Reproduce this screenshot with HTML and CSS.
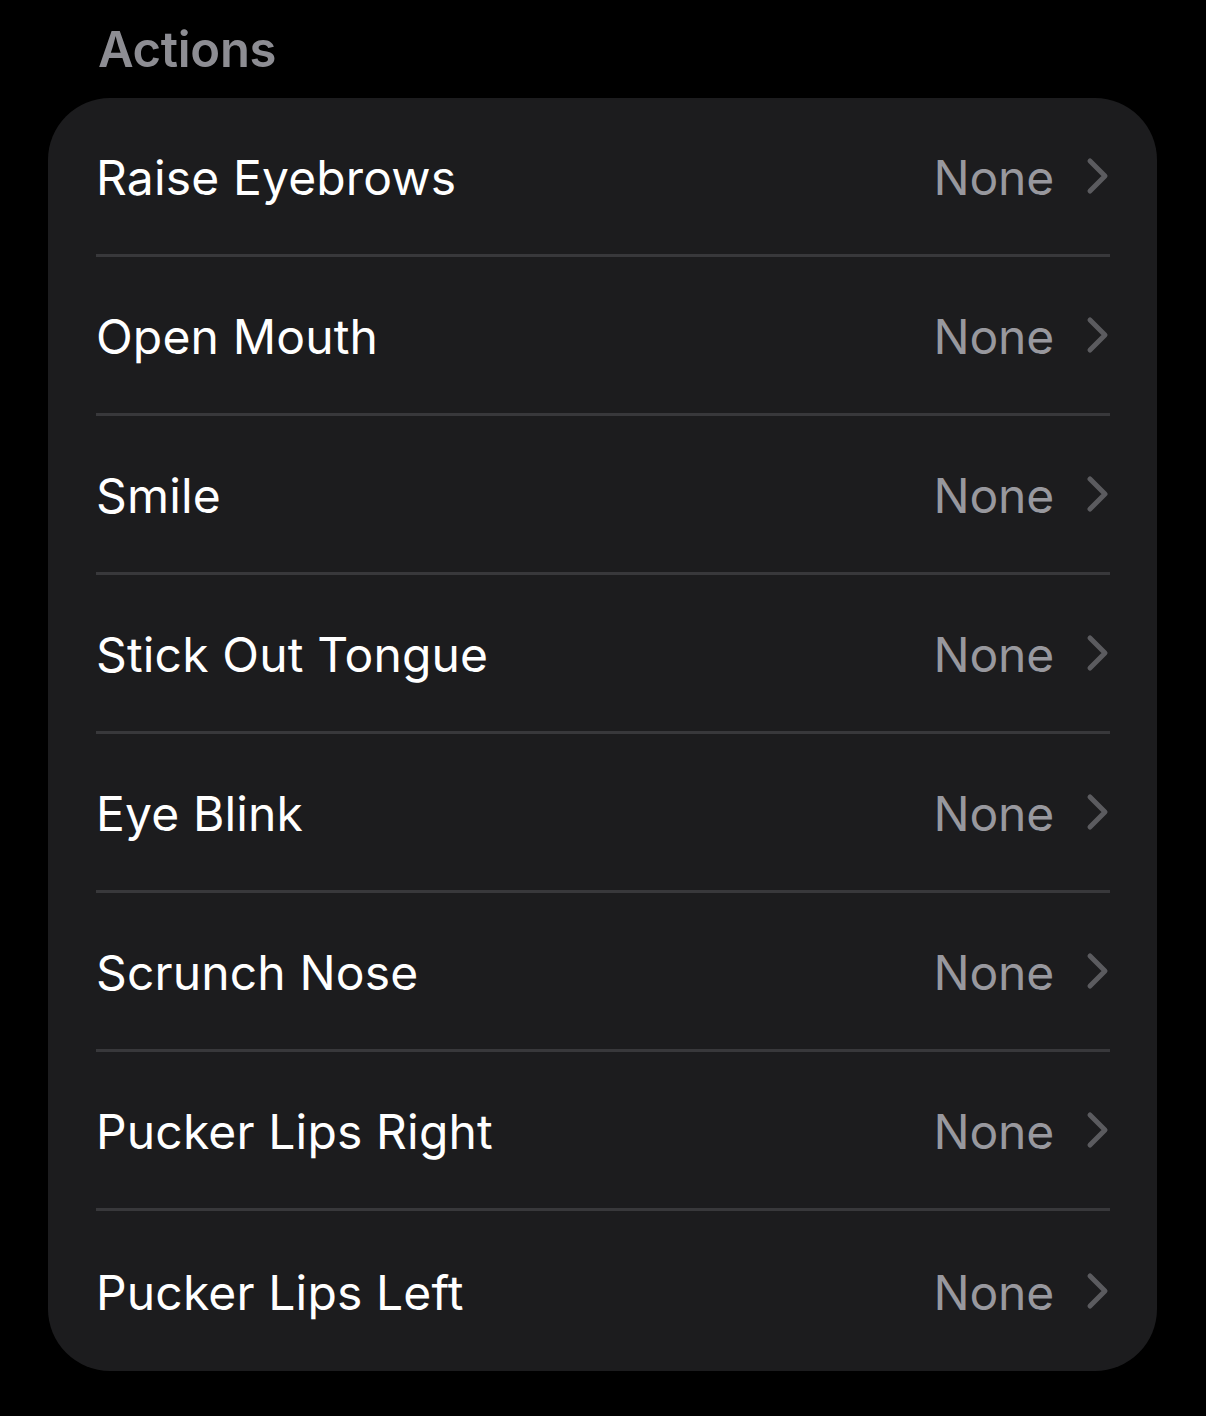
FILE: index.html
```html
<!DOCTYPE html>
<html lang="en">
<head>
<meta charset="utf-8">
<title>Actions</title>
<link rel="stylesheet" href="styles.css">
</head>
<body>
<main class="page">
  <h2 class="section-title">Actions</h2>
  <ul class="list">
    <li class="row"><span class="label">Raise Eyebrows</span><span class="value">None</span><svg class="chev" viewBox="0 0 24 38"><path d="M4 4 L19 19 L4 34"/></svg></li>
    <li class="row"><span class="label">Open Mouth</span><span class="value">None</span><svg class="chev" viewBox="0 0 24 38"><path d="M4 4 L19 19 L4 34"/></svg></li>
    <li class="row"><span class="label">Smile</span><span class="value">None</span><svg class="chev" viewBox="0 0 24 38"><path d="M4 4 L19 19 L4 34"/></svg></li>
    <li class="row"><span class="label">Stick Out Tongue</span><span class="value">None</span><svg class="chev" viewBox="0 0 24 38"><path d="M4 4 L19 19 L4 34"/></svg></li>
    <li class="row"><span class="label">Eye Blink</span><span class="value">None</span><svg class="chev" viewBox="0 0 24 38"><path d="M4 4 L19 19 L4 34"/></svg></li>
    <li class="row"><span class="label">Scrunch Nose</span><span class="value">None</span><svg class="chev" viewBox="0 0 24 38"><path d="M4 4 L19 19 L4 34"/></svg></li>
    <li class="row"><span class="label">Pucker Lips Right</span><span class="value">None</span><svg class="chev" viewBox="0 0 24 38"><path d="M4 4 L19 19 L4 34"/></svg></li>
    <li class="row"><span class="label">Pucker Lips Left</span><span class="value">None</span><svg class="chev" viewBox="0 0 24 38"><path d="M4 4 L19 19 L4 34"/></svg></li>
  </ul>
</main>
</body>
</html>
```
FILE: styles.css
```css
* { box-sizing: border-box; }
html, body {
  margin: 0;
  padding: 0;
  background: #000;
  height: 100%;
}
body {
  font-family: Inter, "Noto Sans", "Liberation Sans", sans-serif;
  color: #fff;
}
.page {
  padding: 0 49px 0 48px;
}
.section-title {
  margin: 0;
  padding: 20px 0 0 50px;
  height: 98px;
  font-size: 49px;
  line-height: 60px;
  font-weight: 600;
  color: #8d8d93;
  letter-spacing: -0.3px;
}
.list {
  list-style: none;
  margin: 0;
  padding: 0 47px 0 48px;
  background: #1c1c1e;
  border-radius: 62px;
}
.row {
  display: flex;
  align-items: center;
  height: 159px;
  border-bottom: 3px solid #38383b;
}
.row:last-child {
  border-bottom: none;
  height: 160px;
}
.label {
  flex: 1;
  font-size: 48px;
  line-height: 1;
  letter-spacing: 0.15px;
  padding-top: 4px;
}
.value {
  font-size: 48px;
  line-height: 1;
  color: #98989e;
  letter-spacing: -0.2px;
  padding-top: 4px;
  margin-right: 32px;
}
.chev {
  width: 24px;
  height: 38px;
  fill: none;
  stroke: #5b5b5f;
  stroke-width: 5;
  stroke-linecap: round;
  stroke-linejoin: round;
}
```
